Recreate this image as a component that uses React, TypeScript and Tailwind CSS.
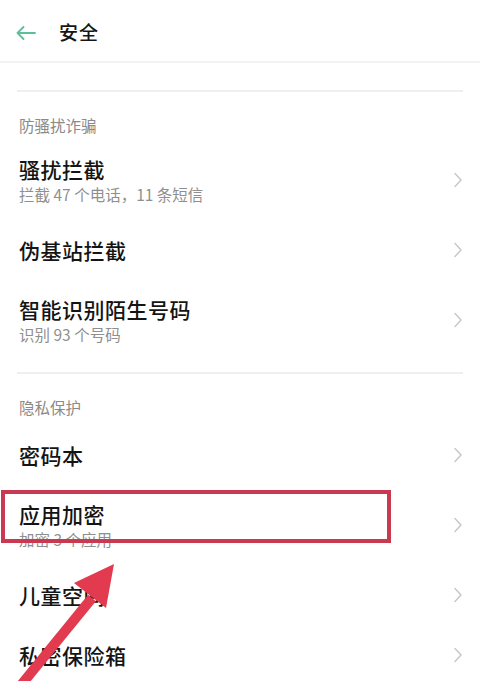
import React from "react";

const font = { fontFamily: '"Noto Sans CJK SC", "Noto Sans", sans-serif' };

function Chevron() {
  return (
    <svg width="10" height="16" viewBox="0 0 10 16" className="shrink-0">
      <path d="M2 1.5 L8 8 L2 14.5" fill="none" stroke="#c6c6c6" strokeWidth="1.4" strokeLinecap="round" strokeLinejoin="round" />
    </svg>
  );
}

function Row({ title, sub }: { title: string; sub?: string }) {
  return (
    <div className={`flex items-center justify-between pl-[19px] pr-[17px] ${sub ? "h-[80px]" : "h-[60px]"}`}>
      <div className="flex flex-col">
        <div className="text-[21px] leading-[26px] text-[#141414] font-medium tracking-[0.5px]">{title}</div>
        {sub && <div className="text-[15.5px] leading-[22px] text-[#8f8f8f] mt-[1px]">{sub}</div>}
      </div>
      <Chevron />
    </div>
  );
}

function SectionLabel({ text }: { text: string }) {
  return (
    <div className="pl-[19px] pt-[22px] pb-[4px] text-[15.5px] leading-[22px] text-[#8a8a8a]">{text}</div>
  );
}

function Divider() {
  return <div className="mx-[17px] h-[2px] bg-[#efefef]" />;
}

export default function App() {
  return (
    <div className="relative w-[480px] h-[681px] overflow-hidden bg-white" style={font}>
      <div className="h-[63px] flex items-center pt-[4px] border-b-2 border-[#f2f2f2]">
        <div className="pl-[16px] w-[59px] flex items-center">
          <svg width="20" height="14" viewBox="0 0 20 14">
            <path d="M19 7 H1.5 M7.5 1 L1.5 7 L7.5 13" fill="none" stroke="#5cbf99" strokeWidth="1.8" strokeLinecap="round" strokeLinejoin="round" />
          </svg>
        </div>
        <div className="text-[19px] text-[#161616] font-medium tracking-[1px]">安全</div>
      </div>
      <div className="h-[27px]" />
      <Divider />
      <SectionLabel text="防骚扰诈骗" />
      <Row title="骚扰拦截" sub="拦截 47 个电话，11 条短信" />
      <Row title="伪基站拦截" />
      <Row title="智能识别陌生号码" sub="识别 93 个号码" />
      <div className="h-[12px]" />
      <Divider />
      <SectionLabel text="隐私保护" />
      <div className="h-[3px]" />
      <Row title="密码本" />
      <Row title="应用加密" sub="加密 3 个应用" />
      <Row title="儿童空间" />
      <Row title="私密保险箱" />

      <div className="absolute left-[1px] top-[490px] w-[390px] h-[53px] border-[4px] border-[#c9394f]" />
      <svg className="absolute left-0 top-0" width="480" height="681" viewBox="0 0 480 681">
        <line x1="17" y1="690" x2="92" y2="598" stroke="#e23a4e" strokeWidth="10" />
        <polygon points="114,564 74,583 106,608" fill="#e23a4e" />
      </svg>
    </div>
  );
}
